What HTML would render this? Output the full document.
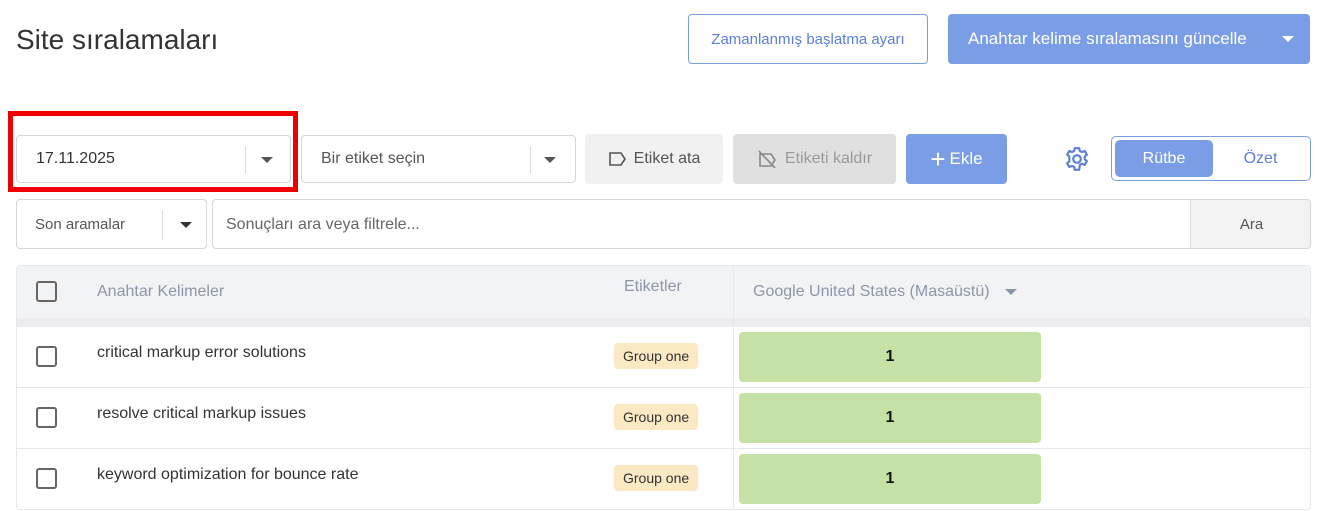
<!DOCTYPE html>
<html><head><meta charset="utf-8"><style>
*{box-sizing:border-box;margin:0;padding:0}
body{width:1325px;height:511px;background:#fff;font-family:"Liberation Sans",sans-serif;position:relative;overflow:hidden;color:#333}
.a{position:absolute}
.btn{position:absolute;display:flex;align-items:center;justify-content:center;border-radius:4px;font-size:16px}
.chk{position:absolute;width:21px;height:21px;border:2px solid #666;border-radius:3px;left:36px}
.tag{position:absolute;left:614px;background:#fbe9c4;border-radius:4px;font-size:14px;padding:5px 9px;color:#333}
.green{position:absolute;left:739px;width:302px;height:50px;background:#c5e1a5;border-radius:4px;display:flex;align-items:center;justify-content:center;font-weight:bold;font-size:16px;color:#111}
.kw{position:absolute;left:97px;font-size:16px;color:#333}
.caret{width:0;height:0;border-left:6px solid transparent;border-right:6px solid transparent;border-top:6px solid #555;position:absolute}
</style></head><body>
<div class="a" style="left:16px;top:24px;font-size:28px;color:#333">Site sıralamaları</div>
<div class="btn" style="left:688px;top:14px;width:240px;height:50px;border:1px solid #7b9de6;color:#5b7fd6;font-size:15px">Zamanlanmış başlatma ayarı</div>
<div class="btn" style="left:948px;top:14px;width:362px;height:50px;background:#7b9de6;color:#fff;justify-content:flex-start;padding-left:20px;font-size:17px">Anahtar kelime sıralamasını güncelle<div class="caret" style="right:16px;top:22px;border-top-color:#fff"></div></div>

<div class="a" style="left:8px;top:111px;width:290px;height:81px;border:5px solid #e00"></div>
<div class="a" style="left:16px;top:135px;width:275px;height:48px;border:1px solid #d6d6d6;border-radius:4px"><span class="a" style="left:19px;top:14px;font-size:16px">17.11.2025</span><div class="a" style="left:228px;top:10px;width:1px;height:28px;background:#ddd"></div><div class="caret" style="left:244px;top:21px"></div></div>
<div class="a" style="left:301px;top:135px;width:275px;height:48px;border:1px solid #d6d6d6;border-radius:4px"><span class="a" style="left:19px;top:14px;font-size:16px;color:#555">Bir etiket seçin</span><div class="a" style="left:228px;top:10px;width:1px;height:28px;background:#ddd"></div><div class="caret" style="left:242px;top:21px"></div></div>
<div class="btn" style="left:585px;top:134px;width:138px;height:50px;background:#f1f1f1;color:#555"><svg width="20" height="16" style="margin-right:6px"><path d="M2 2h11l4 6-4 6H2z" fill="none" stroke="#555" stroke-width="1.6"/></svg>Etiket ata</div>
<div class="btn" style="left:733px;top:134px;width:163px;height:50px;background:#e0e0e0;color:#9a9a9a"><svg width="22" height="18" style="margin-right:6px"><path d="M3 4h11l4 6-4 6H3z" fill="none" stroke="#888" stroke-width="1.6"/><path d="M2 1l16 17" stroke="#888" stroke-width="1.6"/></svg>Etiketi kaldır</div>
<div class="btn" style="left:906px;top:134px;width:101px;height:50px;background:#7b9de6;color:#fff;font-size:17px"><span style="font-size:26px;margin-right:4px;line-height:1">+</span>Ekle</div>
<svg class="a" style="left:1064px;top:146px" width="26" height="26" viewBox="0 0 24 24"><path d="M12 8.5a3.5 3.5 0 1 0 0 7 3.5 3.5 0 0 0 0-7z" fill="none" stroke="#5b7fd6" stroke-width="2"/><path d="M10 2h4l.6 2.6 2 1 2.5-1 2 3.4-2 1.8v2.4l2 1.8-2 3.4-2.5-1-2 1L14 22h-4l-.6-2.6-2-1-2.5 1-2-3.4 2-1.8V9.8l-2-1.8 2-3.4 2.5 1 2-1z" fill="none" stroke="#5b7fd6" stroke-width="2" stroke-linejoin="round"/></svg>
<div class="a" style="left:1111px;top:136px;width:200px;height:45px;border:1px solid #7b9de6;border-radius:5px"></div>
<div class="btn" style="left:1115px;top:140px;width:98px;height:37px;background:#7b9de6;color:#fff;border-radius:5px">Rütbe</div>
<div class="btn" style="left:1213px;top:140px;width:95px;height:37px;color:#5b7fd6">Özet</div>

<div class="a" style="left:16px;top:199px;width:191px;height:50px;border:1px solid #d6d6d6;border-radius:4px"><span class="a" style="left:18px;top:16px;font-size:15px;color:#555">Son aramalar</span><div class="a" style="left:145px;top:10px;width:1px;height:30px;background:#ddd"></div><div class="caret" style="left:163px;top:22px;border-top-color:#333"></div></div>
<div class="a" style="left:212px;top:199px;width:1099px;height:50px;border:1px solid #d6d6d6;border-radius:4px;overflow:hidden"><span class="a" style="left:13px;top:16px;font-size:16px;color:#666">Sonuçları ara veya filtrele...</span><div class="btn" style="left:977px;top:0;width:122px;height:48px;background:#f3f3f3;border-left:1px solid #ddd;border-radius:0;color:#555;font-size:15px">Ara</div></div>

<div class="a" style="left:16px;top:265px;width:1295px;height:245px;border:1px solid #e6e8ec;border-radius:4px;overflow:hidden">
<div class="a" style="left:0;top:0;width:100%;height:52px;background:#f2f3f5"></div>
<div class="a" style="left:0;top:52px;width:100%;height:9px;background:#ececee"></div>
<div class="a" style="left:716px;top:0;width:1px;height:245px;background:#e6e8ec"></div>
<div class="a" style="left:0;top:121px;width:100%;height:1px;background:#e6e8ec"></div>
<div class="a" style="left:0;top:182px;width:100%;height:1px;background:#e6e8ec"></div>
</div>
<div class="chk" style="top:281px"></div>
<div class="a" style="left:97px;top:283px;font-size:16px;color:#8d96a8">Anahtar Kelimeler</div>
<div class="a" style="left:624px;top:278px;font-size:16px;color:#8d96a8">Etiketler</div>
<div class="a" style="left:753px;top:283px;font-size:16px;color:#8d96a8">Google United States (Masaüstü)</div>
<div class="caret" style="left:1005px;top:289px;border-top-color:#8d96a8"></div>

<div class="chk" style="top:346px"></div><div class="kw" style="top:344px">critical markup error solutions</div><div class="tag" style="top:343px">Group one</div><div class="green" style="top:332px">1</div>
<div class="chk" style="top:407px"></div><div class="kw" style="top:405px">resolve critical markup issues</div><div class="tag" style="top:404px">Group one</div><div class="green" style="top:393px">1</div>
<div class="chk" style="top:468px"></div><div class="kw" style="top:466px">keyword optimization for bounce rate</div><div class="tag" style="top:465px">Group one</div><div class="green" style="top:454px">1</div>
</body></html>
